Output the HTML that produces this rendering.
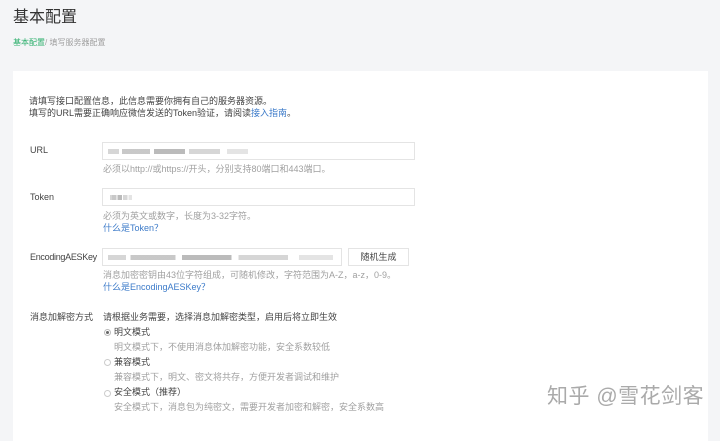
<!DOCTYPE html>
<html><head><meta charset="utf-8"><style>
*{margin:0;padding:0;box-sizing:border-box}
body{width:720px;height:434px;overflow:hidden;background:#f4f5f7;font-family:"Liberation Sans","Noto Sans CJK SC",sans-serif;color:#444;position:relative;font-size:9px}
.a{position:absolute;white-space:nowrap;line-height:1}
.card{position:absolute;left:13px;top:71px;width:695px;height:370px;background:#fff}
.in{position:absolute;border:1px solid #e4e4e4;background:#fff}
.g{color:#a0a0a0}
.l{color:#3d7bc9}
.blur{position:absolute;height:5px;background:linear-gradient(90deg,#ccc 0 8%,#fff 8% 10%,#bbb 10% 30%,#fff 30% 33%,#aaa 33% 55%,#fff 55% 58%,#ccc 58% 80%,#fff 80% 85%,#ddd 85% 100%);opacity:.8}
.r{position:absolute;width:7px;height:7px;border:1px solid #ccc;border-radius:50%}
</style></head><body>
<div class="a" style="left:13px;top:10px;font-size:16px;color:#333">基本配置</div>
<div class="a" style="left:13px;top:39px;font-size:8px"><span style="color:#2bae6b">基本配置</span><span class="g">/ 填写服务器配置</span></div>
<div class="card"></div>
<div class="a" style="left:29px;top:97px">请填写接口配置信息，此信息需要你拥有自己的服务器资源。</div>
<div class="a" style="left:29px;top:109px">填写的URL需要正确响应微信发送的Token验证，请阅读<span class="l">接入指南</span>。</div>
<div class="a" style="left:30px;top:146px">URL</div>
<div class="in" style="left:102px;top:142px;width:313px;height:18px"></div>
<div class="blur" style="left:108px;top:149px;width:140px"></div>
<div class="a g" style="left:103px;top:165px">必须以http://或https://开头，分别支持80端口和443端口。</div>
<div class="a" style="left:30px;top:193px">Token</div>
<div class="in" style="left:102px;top:188px;width:313px;height:18px"></div>
<div class="blur" style="left:110px;top:195px;width:22px"></div>
<div class="a g" style="left:103px;top:212px">必须为英文或数字，长度为3-32字符。</div>
<div class="a l" style="left:103px;top:224px">什么是Token？</div>
<div class="a" style="left:30px;top:253px;letter-spacing:-0.3px">EncodingAESKey</div>
<div class="in" style="left:102px;top:248px;width:240px;height:18px"></div>
<div class="blur" style="left:108px;top:255px;width:225px"></div>
<div class="in" style="left:348px;top:248px;width:61px;height:18px;text-align:center;line-height:16px">随机生成</div>
<div class="a g" style="left:103px;top:271px">消息加密密钥由43位字符组成，可随机修改，字符范围为A-Z，a-z，0-9。</div>
<div class="a l" style="left:103px;top:283px">什么是EncodingAESKey？</div>
<div class="a" style="left:30px;top:313px">消息加解密方式</div>
<div class="a" style="left:103px;top:313px">请根据业务需要，选择消息加解密类型，启用后将立即生效</div>
<div class="r" style="left:104px;top:329px;border-color:#bbb"><div style="width:3px;height:3px;background:#666;border-radius:50%;margin:1px"></div></div>
<div class="a" style="left:114px;top:328px">明文模式</div>
<div class="a g" style="left:114px;top:343px">明文模式下，不使用消息体加解密功能，安全系数较低</div>
<div class="r" style="left:104px;top:359px"></div>
<div class="a" style="left:114px;top:358px">兼容模式</div>
<div class="a g" style="left:114px;top:373px">兼容模式下，明文、密文将共存，方便开发者调试和维护</div>
<div class="r" style="left:104px;top:390px"></div>
<div class="a" style="left:114px;top:388px">安全模式（推荐）</div>
<div class="a g" style="left:114px;top:403px">安全模式下，消息包为纯密文，需要开发者加密和解密，安全系数高</div>
<div class="a" style="left:547px;top:386px;font-size:21px;color:#aaa;letter-spacing:0.5px">知乎 @雪花剑客</div>
</body></html>
